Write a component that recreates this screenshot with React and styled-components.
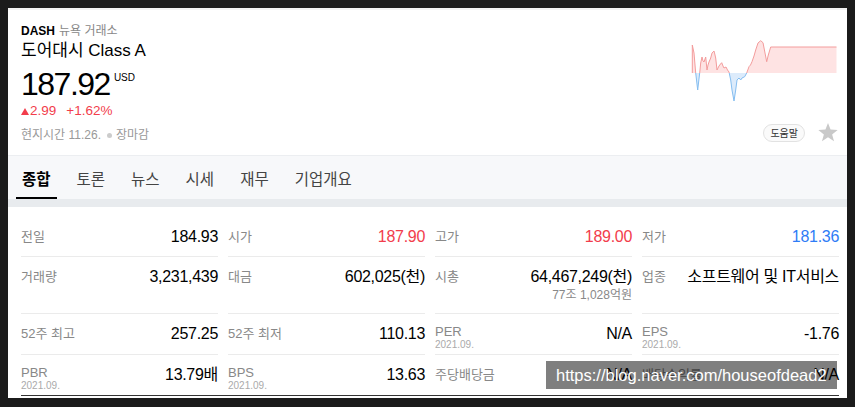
import React from 'react'
import styled, { createGlobalStyle } from 'styled-components'

const GlobalStyle = createGlobalStyle`
  html, body {
    margin: 0;
    background: #1b1b1b;
  }
  body {
    font-family: 'Liberation Sans', 'Noto Sans CJK KR', sans-serif;
    color: #000;
  }
`

const RED = '#f23d4c'
const BLUE = '#2e7cf6'

const Page = styled.div`
  padding: 8px;
`

const Card = styled.div`
  position: relative;
  width: 839px;
  height: 390px;
  box-sizing: border-box;
  background: #fff;
  border-top: 2px solid #f1f1f1;
  overflow: hidden;
`

const Header = styled.div`
  display: flex;
  justify-content: space-between;
  height: 145px;
  box-sizing: border-box;
  padding: 13px 9px 13px 13px;
`

const Info = styled.div`
  display: flex;
  flex-direction: column;
`

const Ticker = styled.div`
  font-size: 12px;
  line-height: 16px;

  b {
    font-weight: bold;
  }
`

const Exchange = styled.span`
  color: #888;
  margin-left: 4px;
`

const Title = styled.div`
  font-size: 17px;
  line-height: 22px;
  margin-top: 1px;
`

const PriceRow = styled.div`
  display: flex;
  align-items: flex-start;
  margin-top: 4px;
`

const Price = styled.span`
  font-size: 32px;
  line-height: 36px;
  letter-spacing: -1.5px;
`

const Currency = styled.span`
  font-size: 10px;
  line-height: 12px;
  margin: 6px 0 0 4px;
`

const Change = styled.div`
  display: flex;
  align-items: baseline;
  font-size: 13.5px;
  line-height: 18px;
  color: ${RED};
`

const UpArrow = styled.span`
  display: inline-block;
  width: 0;
  height: 0;
  border-left: 4px solid transparent;
  border-right: 4px solid transparent;
  border-bottom: 7px solid ${RED};
  margin-right: 1px;
`

const Rate = styled.span`
  margin-left: 10px;
`

const Status = styled.div`
  display: flex;
  align-items: center;
  font-size: 12px;
  line-height: 16px;
  color: #999;
  margin-top: 7px;
`

const Dot = styled.span`
  width: 5px;
  height: 5px;
  border-radius: 50%;
  background: #ccc;
  margin: 0 4px 0 6px;
`

const Side = styled.div`
  display: flex;
  flex-direction: column;
  justify-content: space-between;
  align-items: flex-end;
`

const Spark = styled.svg`
  display: block;
  margin-top: 15px;
`

const Actions = styled.div`
  display: flex;
  align-items: center;
  gap: 13px;
`

const HelpButton = styled.button`
  height: 18px;
  padding: 0 6px;
  border: 1px solid #e2e2e2;
  border-radius: 9px;
  background: #fafafa;
  font-family: 'Noto Sans CJK KR', sans-serif;
  font-size: 10px;
  line-height: 16px;
  color: #333;
`

const TabBar = styled.nav`
  display: flex;
  gap: 14px;
  height: 44px;
  box-sizing: border-box;
  padding: 0 8px;
  background: #f7f8fa;
  border-top: 1px solid #eceef1;
`

const Tab = styled.div`
  display: flex;
  align-items: center;
  padding: 2px 6px 0;
  font-size: 15.5px;
  color: ${p => (p.$active ? '#000' : '#444')};
  font-weight: ${p => (p.$active ? 600 : 400)};
  border-bottom: 2px solid ${p => (p.$active ? '#000' : 'transparent')};
`

const Band = styled.div`
  height: 8px;
  background: #e8ebee;
`

const Section = styled.div`
  padding: 10px 8px 0 13px;
`

const Grid = styled.div`
  display: grid;
  grid-template-columns: repeat(4, 197px);
  column-gap: 10px;
  border-bottom: 1px solid #333;
`

const Cell = styled.div`
  display: flex;
  justify-content: space-between;
  align-items: flex-start;
  min-height: 40px;
  box-sizing: border-box;
  padding: 11px 0 3px;
  border-bottom: ${p => (p.$last ? 'none' : '1px solid #ebebeb')};
`

const Label = styled.div`
  display: flex;
  flex-direction: column;
  font-size: 13px;
  line-height: ${p => (p.$dated ? '14px' : '18px')};
  color: #888;
  white-space: nowrap;
`

const DateNote = styled.span`
  font-size: 10px;
  line-height: 12px;
  color: #aaa;
`

const ValueBox = styled.div`
  display: flex;
  flex-direction: column;
  align-items: flex-end;
`

const Value = styled.span`
  font-size: 16px;
  line-height: 18px;
  letter-spacing: -0.3px;
  color: ${p => p.$color || '#000'};
  white-space: nowrap;
`

const SubValue = styled.span`
  font-size: 12px;
  line-height: 18px;
  color: #888;
  padding-bottom: 6px;
`

const Watermark = styled.div`
  position: absolute;
  left: 538px;
  top: 351px;
  width: 291px;
  height: 28px;
  box-sizing: border-box;
  padding-left: 10px;
  background: rgba(0, 0, 0, 0.5);
  color: #fff;
  font-family: 'Liberation Sans', sans-serif;
  font-size: 16.5px;
  line-height: 28px;
  white-space: nowrap;
`

const points = [
  [2.3, 35], [2.3, 7], [4, 15], [5.7, 35], [7.7, 52], [8.5, 45], [9.7, 35],
  [10.7, 25], [12, 19], [13, 23], [14, 24], [15.7, 19], [17, 32], [18, 27],
  [19, 24], [20.7, 20], [22, 15], [24, 13], [25, 17], [25.7, 20], [27, 32],
  [29, 28], [30.5, 26], [31.7, 24.7], [33, 28], [34, 30], [36, 29], [37.5, 32],
  [39, 34], [40.7, 42], [42, 52], [44, 63], [45.7, 52], [47, 42], [49, 40],
  [50.7, 42], [52, 40], [54.7, 38.7], [56.7, 35], [59, 28.7], [60.5, 27],
  [62, 23.7], [64, 18], [65.7, 12], [68, 5], [70.7, 2.7], [73, 4.7], [75, 15],
  [76.7, 23.7], [78.3, 17], [80.7, 9], [146.5, 9],
]

const linePath = 'M' + points.map(([x, y]) => `${x},${y}`).join(' L')
const areaPath = `${linePath} L146.5,35 L2.3,35 Z`

const Sparkline = () => (
  <Spark width="148" height="66" viewBox="0 0 148 66">
    <defs>
      <clipPath id="above">
        <rect x="0" y="0" width="148" height="35" />
      </clipPath>
      <clipPath id="below">
        <rect x="0" y="35" width="148" height="31" />
      </clipPath>
    </defs>
    <g clipPath="url(#above)">
      <path d={areaPath} fill="#fee3e3" />
      <path d={linePath} fill="none" stroke="#f39c9c" strokeWidth="1" />
    </g>
    <g clipPath="url(#below)">
      <path d={areaPath} fill="#dcebfb" />
      <path d={linePath} fill="none" stroke="#84bdf0" strokeWidth="1" />
    </g>
  </Spark>
)

const Star = () => (
  <svg width="20" height="19" viewBox="0 0 24 23">
    <path
      d="M12 0 L15.1 8 L23.7 8.4 L17 13.8 L19.3 22.1 L12 17.4 L4.7 22.1 L7 13.8 L0.3 8.4 L8.9 8 Z"
      fill="#c9c9c9"
    />
  </svg>
)

const tabs = ['종합', '토론', '뉴스', '시세', '재무', '기업개요']

const rows = [
  [
    { label: '전일', value: '184.93' },
    { label: '시가', value: '187.90', color: RED },
    { label: '고가', value: '189.00', color: RED },
    { label: '저가', value: '181.36', color: BLUE },
  ],
  [
    { label: '거래량', value: '3,231,439' },
    { label: '대금', value: '602,025(천)' },
    { label: '시총', value: '64,467,249(천)', sub: '77조 1,028억원' },
    { label: '업종', value: '소프트웨어 및 IT서비스' },
  ],
  [
    { label: '52주 최고', value: '257.25' },
    { label: '52주 최저', value: '110.13' },
    { label: 'PER', date: '2021.09.', value: 'N/A' },
    { label: 'EPS', date: '2021.09.', value: '-1.76' },
  ],
  [
    { label: 'PBR', date: '2021.09.', value: '13.79배' },
    { label: 'BPS', date: '2021.09.', value: '13.63' },
    { label: '주당배당금', value: 'N/A' },
    { label: '배당수익률', value: 'N/A' },
  ],
]

export default function App() {
  return (
    <Page>
      <GlobalStyle />
      <Card>
        <Header>
          <Info>
            <Ticker>
              <b>DASH</b>
              <Exchange>뉴욕 거래소</Exchange>
            </Ticker>
            <Title>도어대시 Class A</Title>
            <PriceRow>
              <Price>187.92</Price>
              <Currency>USD</Currency>
            </PriceRow>
            <Change>
              <UpArrow />
              <span>2.99</span>
              <Rate>+1.62%</Rate>
            </Change>
            <Status>
              현지시간 11.26.
              <Dot />
              장마감
            </Status>
          </Info>
          <Side>
            <Sparkline />
            <Actions>
              <HelpButton>도움말</HelpButton>
              <Star />
            </Actions>
          </Side>
        </Header>

        <TabBar>
          {tabs.map((t, i) => (
            <Tab key={t} $active={i === 0}>
              {t}
            </Tab>
          ))}
        </TabBar>
        <Band />

        <Section>
          <Grid>
            {rows.map((row, r) =>
              row.map(cell => (
                <Cell key={cell.label} $last={r === rows.length - 1}>
                  <Label $dated={!!cell.date}>
                    {cell.label}
                    {cell.date && <DateNote>{cell.date}</DateNote>}
                  </Label>
                  <ValueBox>
                    <Value $color={cell.color}>{cell.value}</Value>
                    {cell.sub && <SubValue>{cell.sub}</SubValue>}
                  </ValueBox>
                </Cell>
              ))
            )}
          </Grid>
        </Section>

        <Watermark>https://blog.naver.com/houseofdead2</Watermark>
      </Card>
    </Page>
  )
}
